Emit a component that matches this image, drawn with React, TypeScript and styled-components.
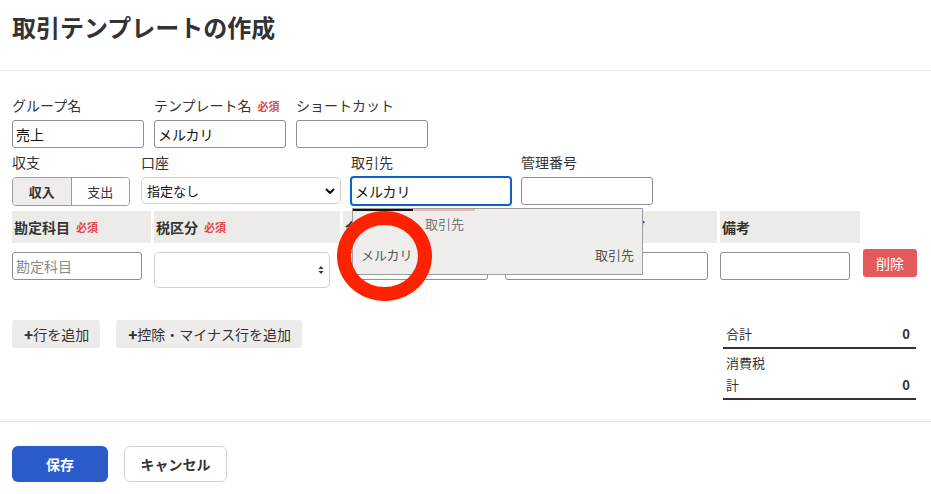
import React from 'react';
import styled, { createGlobalStyle } from 'styled-components';

const textColor = '#333333';
const requiredColor = '#e5484d';
const headBg = '#edebe7';

const GlobalStyle = createGlobalStyle`
  body {
    margin: 0;
    background: #ffffff;
    font-family: 'Noto Sans CJK JP', 'Noto Sans', sans-serif;
    color: ${textColor};
  }
`;

const Page = styled.div`
  width: 931px;
  height: 494px;
  position: relative;
  overflow: hidden;
`;

const Header = styled.header`
  height: 71px;
  border-bottom: 1px solid #e4e4e4;
  padding: 11px 12px 0;
  box-sizing: border-box;
`;

const Title = styled.h1`
  margin: 0;
  font-size: 24px;
  font-weight: 700;
  line-height: 32px;
  color: #333;
`;

const Body = styled.section`
  padding: 24px 12px 0;
  height: 351px;
  box-sizing: border-box;
  border-bottom: 1px solid #e4e4e4;
`;

const FieldRow = styled.div<{ $mt?: number }>`
  display: flex;
  align-items: flex-start;
  gap: 10px;
  margin-top: ${(p) => p.$mt || 0}px;
`;

const Field = styled.div<{ $w: number; $ml?: number }>`
  width: ${(p) => p.$w}px;
  margin-left: ${(p) => p.$ml || 0}px;
  display: flex;
  flex-direction: column;
  position: relative;
`;

const Label = styled.label`
  font-size: 14px;
  line-height: 20px;
  height: 25px;
  color: #333;
  white-space: nowrap;
`;

const Required = styled.span`
  color: ${requiredColor};
  font-size: 11px;
  font-weight: 700;
  margin-left: 6px;
`;

const TextBox = styled.div<{ $focus?: boolean; $w?: number; $h?: number; $placeholder?: boolean }>`
  box-sizing: border-box;
  width: ${(p) => (p.$w ? `${p.$w}px` : '100%')};
  height: ${(p) => p.$h || 28}px;
  border: 1px solid ${(p) => (p.$focus ? '#0b5fd3' : '#8f8f8f')};
  box-shadow: ${(p) => (p.$focus ? '0 0 0 1px #0b5fd3' : 'none')};
  border-radius: 3px;
  padding: 0 3px;
  font-size: 14px;
  line-height: 26px;
  color: ${(p) => (p.$placeholder ? '#8a8a8a' : '#111')};
  background: #fff;
`;

const Segments = styled.div`
  display: flex;
  width: 118px;
  height: 29px;
  border: 1px solid #9a9a9a;
  border-radius: 4px;
  box-sizing: border-box;
  overflow: hidden;
`;

const Segment = styled.div<{ $active?: boolean }>`
  flex: 1;
  display: flex;
  align-items: center;
  justify-content: center;
  font-size: 13px;
  font-weight: ${(p) => (p.$active ? 700 : 400)};
  background: ${(p) => (p.$active ? '#efedeb' : '#fff')};
  border-right: ${(p) => (p.$active ? '1px solid #9a9a9a' : 'none')};
`;

const SelectBox = styled.div<{ $h?: number; $w?: number }>`
  box-sizing: border-box;
  width: ${(p) => (p.$w ? `${p.$w}px` : '100%')};
  height: ${(p) => p.$h || 27}px;
  border: 1px solid #d2d2d2;
  border-radius: 5px;
  background: #fff;
  display: flex;
  align-items: center;
  justify-content: space-between;
  padding: 0 4px 0 5px;
  font-size: 13px;
  color: #111;
`;

const Grid = styled.div`
  display: grid;
  grid-template-columns: 139px 186px 154px 217px 140px 56px;
  column-gap: 3px;
  margin-top: 5px;
`;

const HeadCell = styled.div<{ $bg?: boolean; $pl?: number }>`
  height: 32px;
  background: ${(p) => (p.$bg === false ? 'transparent' : headBg)};
  display: flex;
  align-items: center;
  padding-left: ${(p) => p.$pl || 2}px;
  font-size: 14px;
  font-weight: 700;
  color: #333;
  white-space: nowrap;
  overflow: hidden;
`;

const Cell = styled.div<{ $pl?: number }>`
  padding-top: 9px;
  padding-left: ${(p) => p.$pl || 0}px;
`;

const DeleteButton = styled.div`
  width: 54px;
  height: 28px;
  margin-top: -3px;
  border-radius: 3px;
  background: #e45a5a;
  color: #fff;
  font-size: 14px;
  display: flex;
  align-items: center;
  justify-content: center;
`;

const Lower = styled.div`
  display: flex;
  justify-content: space-between;
  margin-top: 32px;
`;

const AddButtons = styled.div`
  display: flex;
  gap: 16px;
  align-items: flex-start;
`;

const AddButton = styled.div`
  height: 28px;
  padding: 0 11px 0 12px;
  background: #edecea;
  border-radius: 3px;
  font-size: 14px;
  display: flex;
  align-items: center;
  color: #333;
`;

const Plus = styled.span`
  font-weight: 900;
  font-size: 15px;
`;

const Totals = styled.div`
  width: 193px;
  margin-right: 3px;
  font-size: 13px;
`;

const TotalRow = styled.div`
  display: flex;
  justify-content: space-between;
  align-items: flex-end;
  border-bottom: 2px solid #333;
  padding: 3px 6px 2px 3px;
  line-height: 22px;
`;

const Amount = styled.span`
  font-weight: 700;
`;

const Footer = styled.footer`
  display: flex;
  gap: 16px;
  padding: 24px 12px 0;
`;

const PrimaryButton = styled.div`
  width: 96px;
  height: 36px;
  border-radius: 6px;
  background: #2a5bc9;
  color: #fff;
  font-size: 14px;
  font-weight: 700;
  display: flex;
  align-items: center;
  justify-content: center;
`;

const SecondaryButton = styled.div`
  width: 103px;
  height: 36px;
  box-sizing: border-box;
  border: 1px solid #d4d4d4;
  border-radius: 6px;
  background: #fff;
  color: #333;
  font-size: 14px;
  font-weight: 700;
  display: flex;
  align-items: center;
  justify-content: center;
`;

const Suggest = styled.div`
  position: absolute;
  top: 56px;
  left: 1px;
  width: 291px;
  height: 67px;
  box-sizing: border-box;
  background: #efeeec;
  border: 1px solid #9d9d9d;
  z-index: 5;
  font-size: 13px;
  color: #555;
`;

const SuggestTabs = styled.div`
  display: flex;
  height: 2px;
`;

const Tab = styled.div<{ $w: number; $c: string }>`
  width: ${(p) => p.$w}px;
  background: ${(p) => p.$c};
`;

const SuggestHead = styled.div`
  padding: 3px 0 0 72px;
  line-height: 20px;
  color: #777;
`;

const SuggestItem = styled.div`
  display: flex;
  justify-content: space-between;
  padding: 11px 8px 0 8px;
  line-height: 20px;
`;

const Ring = styled.div`
  position: absolute;
  left: 337px;
  top: 211px;
  width: 95px;
  height: 90px;
  box-sizing: border-box;
  border: 14px solid #ff2200;
  border-radius: 50%;
  z-index: 6;
`;

const Chevron = () => (
  <svg width="12" height="12" viewBox="0 0 12 12">
    <path d="M2.5 4.5 L6 8 L9.5 4.5" fill="none" stroke="#111" strokeWidth="2" strokeLinecap="round" strokeLinejoin="round" />
  </svg>
);

const UpDown = () => (
  <svg width="8" height="12" viewBox="0 0 8 12">
    <path d="M1.5 5 L4 2 L6.5 5 Z M1.5 7 L4 10 L6.5 7 Z" fill="#333" />
  </svg>
);

const App: React.FC = () => {
  return (
    <Page>
      <GlobalStyle />
      <Header>
        <Title>取引テンプレートの作成</Title>
      </Header>
      <Body>
        <FieldRow>
          <Field $w={132}>
            <Label>グループ名</Label>
            <TextBox>売上</TextBox>
          </Field>
          <Field $w={132}>
            <Label>
              テンプレート名<Required>必須</Required>
            </Label>
            <TextBox>メルカリ</TextBox>
          </Field>
          <Field $w={132}>
            <Label>ショートカット</Label>
            <TextBox />
          </Field>
        </FieldRow>
        <FieldRow $mt={4}>
          <Field $w={118}>
            <Label>収支</Label>
            <Segments>
              <Segment $active>収入</Segment>
              <Segment>支出</Segment>
            </Segments>
          </Field>
          <Field $w={200} $ml={1}>
            <Label>口座</Label>
            <SelectBox>
              <span>指定なし</span>
              <Chevron />
            </SelectBox>
          </Field>
          <Field $w={160}>
            <Label>取引先</Label>
            <TextBox $focus>メルカリ</TextBox>
            <Suggest>
              <SuggestTabs>
                <Tab $w={60} $c="#111" />
                <Tab $w={62} $c="#f3b5b5" />
              </SuggestTabs>
              <SuggestHead>取引先</SuggestHead>
              <SuggestItem>
                <span>メルカリ</span>
                <span>取引先</span>
              </SuggestItem>
            </Suggest>
          </Field>
          <Field $w={132}>
            <Label>管理番号</Label>
            <TextBox />
          </Field>
        </FieldRow>
        <Grid>
          <HeadCell>
            勘定科目<Required>必須</Required>
          </HeadCell>
          <HeadCell>
            税区分<Required>必須</Required>
          </HeadCell>
          <HeadCell>
            金額<Required>必須</Required>
          </HeadCell>
          <HeadCell $pl={5}>品目・部門・メモタグ</HeadCell>
          <HeadCell>備考</HeadCell>
          <HeadCell $bg={false} />
          <Cell>
            <TextBox $w={130} $placeholder>
              勘定科目
            </TextBox>
          </Cell>
          <Cell>
            <SelectBox $w={176} $h={36}>
              <span />
              <UpDown />
            </SelectBox>
          </Cell>
          <Cell>
            <TextBox $w={145} />
          </Cell>
          <Cell $pl={5}>
            <TextBox $w={203} />
          </Cell>
          <Cell>
            <TextBox $w={130} />
          </Cell>
          <Cell>
            <DeleteButton>削除</DeleteButton>
          </Cell>
        </Grid>
        <Lower>
          <AddButtons>
            <AddButton>
              <Plus>+</Plus>行を追加
            </AddButton>
            <AddButton>
              <Plus>+</Plus>控除・マイナス行を追加
            </AddButton>
          </AddButtons>
          <Totals>
            <TotalRow>
              <span>合計</span>
              <Amount>0</Amount>
            </TotalRow>
            <TotalRow>
              <span>
                消費税
                <br />計
              </span>
              <Amount>0</Amount>
            </TotalRow>
          </Totals>
        </Lower>
      </Body>
      <Footer>
        <PrimaryButton>保存</PrimaryButton>
        <SecondaryButton>キャンセル</SecondaryButton>
      </Footer>
      <Ring />
    </Page>
  );
};

export default App;
